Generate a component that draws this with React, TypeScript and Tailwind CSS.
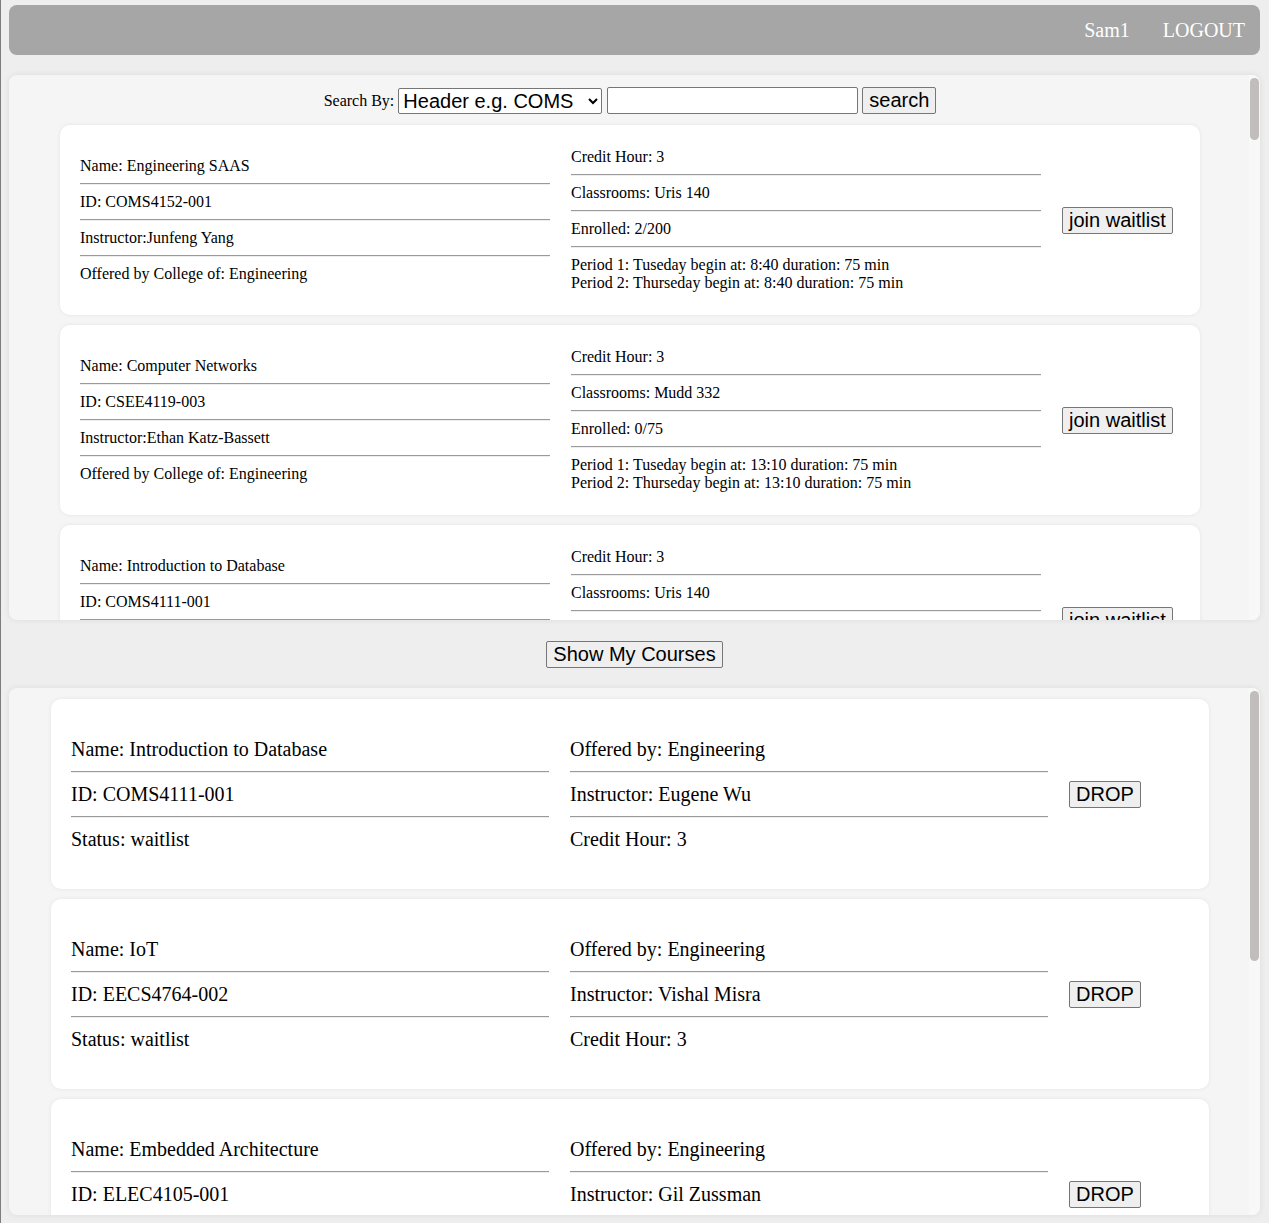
import React from 'react';

interface Period {
  day: string;
  begin: string;
}

interface Course {
  name: string;
  id: string;
  instructor: string;
  college: string;
  credit: number;
  classroom: string;
  enrolled: string;
  periods: Period[];
}

interface MyCourse {
  name: string;
  id: string;
  status: string;
  offeredBy: string;
  instructor: string;
  credit: number;
}

const courses: Course[] = [
  { name: 'Engineering SAAS', id: 'COMS4152-001', instructor: 'Junfeng Yang', college: 'Engineering', credit: 3, classroom: 'Uris 140', enrolled: '2/200', periods: [{ day: 'Tuseday', begin: '8:40' }, { day: 'Thurseday', begin: '8:40' }] },
  { name: 'Computer Networks', id: 'CSEE4119-003', instructor: 'Ethan Katz-Bassett', college: 'Engineering', credit: 3, classroom: 'Mudd 332', enrolled: '0/75', periods: [{ day: 'Tuseday', begin: '13:10' }, { day: 'Thurseday', begin: '13:10' }] },
  { name: 'Introduction to Database', id: 'COMS4111-001', instructor: 'Eugene Wu', college: 'Engineering', credit: 3, classroom: 'Uris 140', enrolled: '1/120', periods: [{ day: 'Monday', begin: '10:10' }, { day: 'Wednesday', begin: '10:10' }] },
];

const myCourses: MyCourse[] = [
  { name: 'Introduction to Database', id: 'COMS4111-001', status: 'waitlist', offeredBy: 'Engineering', instructor: 'Eugene Wu', credit: 3 },
  { name: 'IoT', id: 'EECS4764-002', status: 'waitlist', offeredBy: 'Engineering', instructor: 'Vishal Misra', credit: 3 },
  { name: 'Embedded Architecture', id: 'ELEC4105-001', status: 'waitlist', offeredBy: 'Engineering', instructor: 'Gil Zussman', credit: 3 },
];

const serif = "font-['Liberation_Serif','Times_New_Roman',serif]";
const sans = "font-['Liberation_Sans',Arial,sans-serif]";

// default browser look for buttons
const btn = `${sans} text-[20px] leading-[23px] text-black bg-[#efefef] border border-[#767676] rounded-[2px] px-[6px] py-[1px]`;

function Rule({ gap }: { gap: string }) {
  return <div className={`${gap} border-t border-b border-t-[#9a9a9a] border-b-[#eeeeee]`} />;
}

// scroll track drawn beside the panel content
function ScrollTrack({ thumb }: { thumb: string }) {
  return (
    <div className="w-[11px] shrink-0 bg-[#f8f8f8] pt-[3px] px-[1px]">
      <div className={`${thumb} rounded-full bg-[#c1bdbd]`} />
    </div>
  );
}

function CourseCard({ course }: { course: Course }) {
  return (
    <div className="mx-auto shrink-0 w-[1140px] h-[190px] bg-white rounded-[10px] shadow-[0_0_4px_rgba(0,0,0,0.07)] flex items-center pl-[20px] gap-[21px] text-[16px] leading-[18px] text-black">
      <div className="w-[470px]">
        <div>Name: {course.name}</div>
        <Rule gap="my-[8px]" />
        <div>ID: {course.id}</div>
        <Rule gap="my-[8px]" />
        <div>Instructor:{course.instructor}</div>
        <Rule gap="my-[8px]" />
        <div>Offered by College of: {course.college}</div>
      </div>
      <div className="w-[470px]">
        <div>Credit Hour: {course.credit}</div>
        <Rule gap="my-[8px]" />
        <div>Classrooms: {course.classroom}</div>
        <Rule gap="my-[8px]" />
        <div>Enrolled: {course.enrolled}</div>
        <Rule gap="my-[8px]" />
        {course.periods.map((p, i) => (
          <div key={i}>
            Period {i + 1}: {p.day} begin at: {p.begin} duration: 75 min
          </div>
        ))}
      </div>
      <button className={btn}>join waitlist</button>
    </div>
  );
}

function MyCourseCard({ course }: { course: MyCourse }) {
  return (
    <div className="mx-auto shrink-0 w-[1158px] h-[190px] bg-white rounded-[10px] shadow-[0_0_4px_rgba(0,0,0,0.07)] flex items-center pl-[20px] gap-[21px] text-[20px] leading-[23px] text-black">
      <div className="w-[478px]">
        <div>Name: {course.name}</div>
        <Rule gap="my-[10px]" />
        <div>ID: {course.id}</div>
        <Rule gap="my-[10px]" />
        <div>Status: {course.status}</div>
      </div>
      <div className="w-[478px]">
        <div>Offered by: {course.offeredBy}</div>
        <Rule gap="my-[10px]" />
        <div>Instructor: {course.instructor}</div>
        <Rule gap="my-[10px]" />
        <div>Credit Hour: {course.credit}</div>
      </div>
      <button className={btn}>DROP</button>
    </div>
  );
}

export default function App() {
  return (
    <div className={`${serif} min-h-screen bg-[#eeeeee] border-l border-[#7d7d7d] pl-[8px] pr-[9px] pt-[5px] pb-[8px]`}>
      {/* Top bar */}
      <div className="h-[50px] bg-[#a6a6a6] rounded-[8px] flex items-center justify-end pr-[15px] gap-[33px] text-white text-[20px]">
        <span>Sam1</span>
        <span>LOGOUT</span>
      </div>

      {/* Course search */}
      <div className="mt-[20px] h-[545px] flex bg-[#f5f5f5] rounded-[8px] overflow-hidden shadow-[0_0_6px_rgba(0,0,0,0.08)]">
        <div className="flex-1 overflow-hidden pl-[2px] pt-[11px] flex flex-col gap-[10px]">
          <div className="h-[29px] shrink-0 flex items-center justify-center text-[16px]">
            <span className="mr-[4px]">Search By:</span>
            <select className={`${sans} w-[204px] h-[26px] bg-white border border-[#767676] rounded-[2px] text-[20px] text-black`}>
              <option>Header e.g. COMS</option>
              <option>Name</option>
              <option>Instructor</option>
            </select>
            <input type="text" className="ml-[5px] w-[251px] h-[27px] bg-white border border-[#767676] rounded-[2px]" />
            <button className={`${btn} ml-[4px]`}>search</button>
          </div>
          {courses.map((c) => (
            <CourseCard key={c.id} course={c} />
          ))}
        </div>
        <ScrollTrack thumb="h-[62px]" />
      </div>

      <div className="h-[68px] flex items-center justify-center">
        <button className={btn}>Show My Courses</button>
      </div>

      {/* My courses */}
      <div className="h-[527px] flex bg-[#f5f5f5] rounded-[8px] overflow-hidden shadow-[0_0_6px_rgba(0,0,0,0.08)]">
        <div className="flex-1 overflow-hidden pl-[2px] pt-[11px] flex flex-col gap-[10px]">
          {myCourses.map((c) => (
            <MyCourseCard key={c.id} course={c} />
          ))}
        </div>
        <ScrollTrack thumb="h-[270px]" />
      </div>
    </div>
  );
}
